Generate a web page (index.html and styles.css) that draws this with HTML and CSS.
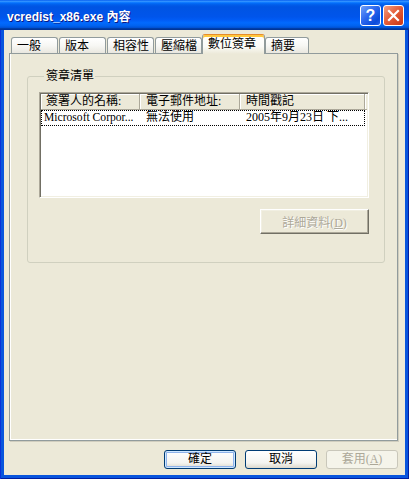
FILE: index.html
```html
<!DOCTYPE html>
<html>
<head>
<meta charset="utf-8">
<link rel="stylesheet" href="styles.css">
</head>
<body>
<div class="window">
  <div class="titlebar">
    <span class="title">vcredist_x86.exe 內容</span>
    <div class="tbtns">
      <span class="tbtn help">?</span>
      <span class="tbtn close"><svg width="13" height="13" viewBox="0 0 13 13"><path d="M2 2 L11 11 M11 2 L2 11" stroke="#fff" stroke-width="2.2" stroke-linecap="square"/></svg></span>
    </div>
  </div>
  <div class="client">
    <div class="tabs">
      <div class="tab w47">一般</div>
      <div class="tab w47">版本</div>
      <div class="tab w47">相容性</div>
      <div class="tab w47 last">壓縮檔</div>
      <div class="tab sel">數位簽章</div>
      <div class="tab w44">摘要</div>
    </div>
    <div class="panel">
      <fieldset class="group">
        <legend class="legend">簽章清單</legend>
        <div class="list">
          <div class="lhead">
            <div class="hcell c1">簽署人的名稱:</div>
            <div class="hcell c2">電子郵件地址:</div>
            <div class="hcell c3">時間戳記</div>
            <div class="hcell fill"></div>
          </div>
          <div class="lrow">
            <div class="cell c1 lat">Microsoft Corpor...</div>
            <div class="cell c2">無法使用</div>
            <div class="cell c3">2005年9月23日 下...</div>
          </div>
        </div>
        <div class="gactions">
          <button class="cbtn" disabled>詳細資料(<u>D</u>)</button>
        </div>
      </fieldset>
    </div>
    <div class="actions">
      <button class="xbtn default">確定</button>
      <button class="xbtn">取消</button>
      <button class="xbtn" disabled>套用(<u>A</u>)</button>
    </div>
  </div>
</div>
</body>
</html>
```
FILE: styles.css
```css
body {
  margin: 0;
  background: #fff;
}
.window {
  width: 409px;
  height: 479px;
  box-sizing: border-box;
  display: flex;
  flex-direction: column;
  background: #0855DD;
  box-shadow: inset 1px 0 #0831D9, inset -1px 0 #001EA0, inset 0 -1px #001EA0;
  font-family: "Liberation Serif", "Noto Sans CJK TC", serif;
  font-size: 12px;
  color: #000;
}
.titlebar {
  height: 30px;
  flex: none;
  box-sizing: border-box;
  display: flex;
  align-items: center;
  justify-content: space-between;
  padding: 0 5px 0 7px;
  background: linear-gradient(#0058EE 0%, #3593FF 4%, #288EFF 6%, #127DFF 8%, #036FFC 10%, #0262EE 14%, #0057E5 20%, #0054E3 24%, #0055EB 56%, #005BF5 66%, #026AFE 76%, #0062EF 86%, #0052D6 92%, #0040AB 94%, #003092 100%);
}
.title {
  color: #fff;
  font: bold 12px "Liberation Sans", "Noto Sans CJK TC", sans-serif;
  text-shadow: 1px 1px #0A1883;
  margin-top: 1px;
}
.tbtns {
  display: flex;
  gap: 2px;
  margin-top: 1px;
}
.tbtn {
  width: 21px;
  height: 21px;
  box-sizing: border-box;
  border: 1px solid #fff;
  border-radius: 3px;
  display: flex;
  align-items: center;
  justify-content: center;
}
.help {
  background: linear-gradient(135deg, #6FA0F8 0%, #2B67EE 45%, #0B4BDA 80%, #2A64E8 100%);
  color: #fff;
  font: bold 16px "Liberation Sans", sans-serif;
  line-height: 19px;
}
.close {
  background: linear-gradient(135deg, #F3A083 0%, #E5603C 45%, #D54420 80%, #C93A1A 100%);
}
.client {
  flex: 1;
  margin: 0 4px 4px;
  background: #ECE9D8;
  padding: 4px 7px 6px 5px;
  display: flex;
  flex-direction: column;
}
.tabs {
  display: flex;
  align-items: flex-end;
  height: 19px;
  margin-left: 2px;
  position: relative;
  z-index: 1;
}
.tab {
  height: 16px;
  box-sizing: border-box;
  border: 1px solid #919B9C;
  border-bottom: none;
  border-radius: 3px 3px 0 0;
  background: linear-gradient(#FFFFFF, #F7F7F4 50%, #E9E7DF);
  padding: 2px 0 0 5px;
  line-height: 13px;
  margin-right: 1px;
  white-space: nowrap;
}
.w47 { width: 47px; }
.w44 { width: 44px; }
.tab.last { margin-right: 0; }
.tab.sel {
  width: 63px;
  height: 20px;
  margin-right: 0;
  margin-bottom: -1px;
  border-top-color: #E68B2C;
  box-shadow: inset 0 2px #FFC83C;
  background: linear-gradient(#FFFFFF, #FBFBF8 60%, #ECE9D8);
  padding: 3px 0 0 5px;
}
.panel {
  height: 388px;
  box-sizing: border-box;
  border: 1px solid #919B9C;
  background: #ECE9D8;
  box-shadow: inset 1px 0 #fff, inset 0 -1px #fff, 1px 1px #D0CDBE;
  padding: 15px 0 0 17px;
}
.group {
  margin: 0;
  width: 358px;
  height: 194px;
  box-sizing: border-box;
  border: 1px solid #D0D0BF;
  border-radius: 3px;
  padding: 9px 0 0 11px;
  min-inline-size: 0;
}
.legend {
  padding: 0 1px 0 2px;
  margin-left: 5px;
  line-height: 14px;
}
.list {
  width: 330px;
  height: 106px;
  box-sizing: border-box;
  background: #fff;
  border: 1px solid;
  border-color: #ACA899 #fff #fff #ACA899;
  box-shadow: inset 1px 1px #716F64, inset -1px -1px #F1EFE2;
  padding: 1px;
}
.lhead {
  display: flex;
  height: 16px;
}
.hcell {
  box-sizing: border-box;
  height: 16px;
  background: #ECE9D8;
  border-right: 1px solid #ACA899;
  border-bottom: 1px solid #ACA899;
  box-shadow: inset 1px 1px #fff;
  padding-left: 6px;
  line-height: 15px;
  white-space: nowrap;
  overflow: hidden;
}
.hcell.c1 { width: 99px; padding-left: 5px; }
.hcell.c2 { width: 100px; }
.hcell.c3 { width: 125px; }
.hcell.fill { flex: 1; padding: 0; border-right: none; }
.lrow {
  display: flex;
  width: 324px;
  height: 16px;
  box-sizing: border-box;
  outline: 1px dotted #000;
  outline-offset: -1px;
  line-height: 15px;
}
.cell {
  box-sizing: border-box;
  white-space: nowrap;
  overflow: hidden;
  padding-left: 6px;
}
.cell.c1 { width: 99px; padding-left: 3px; }
.cell.c2 { width: 100px; }
.cell.c3 { width: 125px; }
.lat { font-size: 11.6px; }
.gactions {
  width: 330px;
  display: flex;
  justify-content: flex-end;
  margin-top: 11px;
}
.cbtn {
  width: 109px;
  height: 25px;
  box-sizing: border-box;
  border: 1px solid;
  border-color: #fff #716F64 #716F64 #fff;
  box-shadow: inset -1px -1px #ACA899, inset 1px 1px #F1EFE2;
  background: #ECE9D8;
  color: #ACA899;
  text-shadow: 1px 1px #fff;
  font: inherit;
  padding: 0;
}
.actions {
  display: flex;
  justify-content: flex-end;
  gap: 9px;
  margin-top: 9px;
}
.xbtn {
  width: 72px;
  height: 19px;
  box-sizing: border-box;
  border: 1px solid #003C74;
  border-radius: 3px;
  background: linear-gradient(#FFFFFF, #F4F4F0 70%, #DCD8CC);
  font: inherit;
  color: #000;
  padding: 0;
  line-height: 15px;
}
.xbtn.default {
  box-shadow: inset 0 0 0 1px #CEE7FF, inset 0 0 0 2px #8FB3EA;
}
.xbtn:disabled {
  border-color: #C9C7BA;
  background: #F5F4EA;
  color: #ACA899;
}
```
